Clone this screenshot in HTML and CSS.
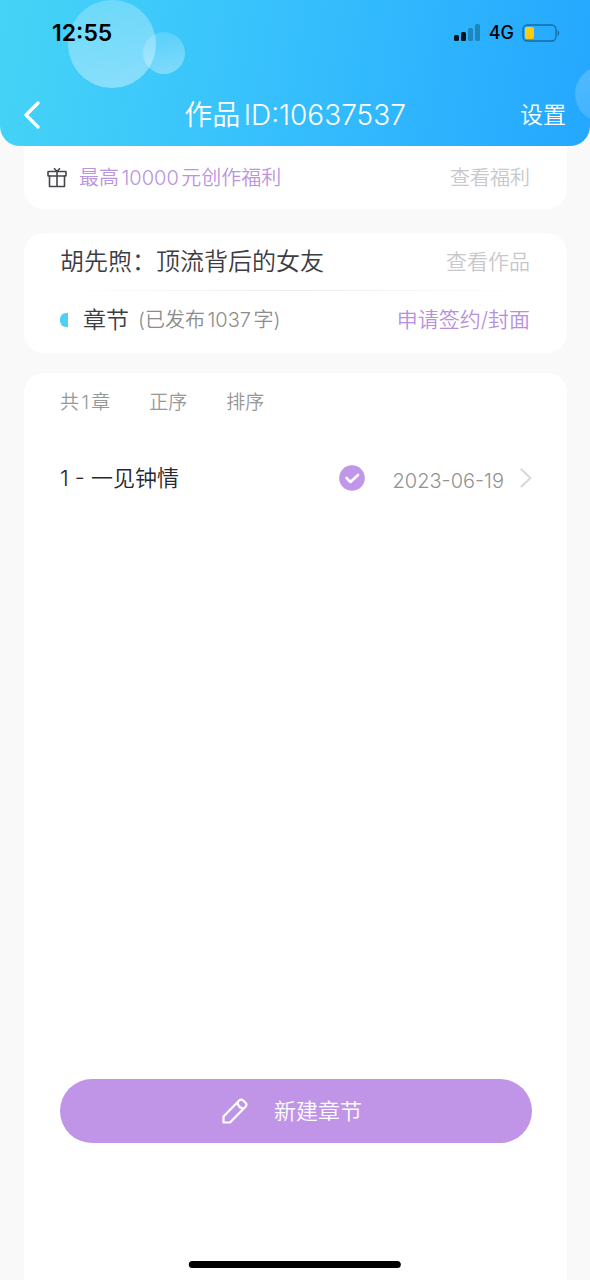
FILE: index.html
```html
<!DOCTYPE html>
<html lang="zh-CN">
<head>
<meta charset="utf-8">
<meta name="viewport" content="width=device-width, initial-scale=1">
<title>作品</title>
<link rel="stylesheet" href="styles.css">
</head>
<body>
<div class="page">
  <header class="header">
    <span class="bubble bubble-large"></span>
    <span class="bubble bubble-small"></span>
    <span class="bubble bubble-edge"></span>
    <div class="status">
      <span class="status-time">12:55</span>
      <div class="status-icons">
        <svg width="27" height="18" viewBox="0 0 27 18" aria-hidden="true">
          <rect x="0" y="11" width="5" height="6" rx="1.5" fill="#06131c"/>
          <rect x="7" y="8" width="5" height="9" rx="1.5" fill="#06131c"/>
          <rect x="14" y="4" width="5" height="13" rx="1.5" fill="#1c86bd"/>
          <rect x="21" y="0" width="5" height="17" rx="1.5" fill="#1c86bd"/>
        </svg>
        <span class="status-network">4G</span>
        <svg width="38" height="18" viewBox="0 0 38 18" aria-hidden="true">
          <rect x="1" y="1" width="33" height="16" rx="4.5" fill="none" stroke="#17699a" stroke-width="1.3"/>
          <rect x="3" y="3" width="9" height="12" rx="2" fill="#ffcb0a"/>
          <path d="M35.6 6.2c2 .8 2 4.800 0 5.600z" fill="#17699a"/>
        </svg>
      </div>
    </div>
    <nav class="nav">
      <button class="nav-back" type="button" aria-label="返回">
        <svg width="16" height="28" viewBox="0 0 16 28" aria-hidden="true"><path d="M14 2 2 14l12 12" fill="none" stroke="#fff" stroke-width="3.200" stroke-linecap="round" stroke-linejoin="round"/></svg>
      </button>
      <h1 class="nav-title">作品ID:10637537</h1>
      <button class="nav-settings" type="button">设置</button>
    </nav>
  </header>

  <main class="content">
    <section class="card welfare">
      <svg class="gift" width="20" height="20" viewBox="0 0 20 20" fill="none" stroke="#45454d" stroke-width="1.600" stroke-linejoin="round" stroke-linecap="round" aria-hidden="true">
        <rect x="1" y="3.500" width="18" height="4.500" rx=".5"/>
        <path d="M2.500 8v10.500h15V8M10 3.500v15M7.500 .8l2.500 2.700L12.500 .8"/>
      </svg>
      <span class="welfare-text">最高10000元创作福利</span>
      <a class="link-muted" href="#welfare">查看福利</a>
    </section>

    <section class="card work">
      <div class="row">
        <h2 class="work-title">胡先煦：顶流背后的女友</h2>
        <a class="link-muted link-large" href="#work">查看作品</a>
      </div>
      <div class="divider"></div>
      <div class="row">
        <span class="marker"></span>
        <h3 class="chapter-label">章节</h3>
        <span class="word-count">(已发布1037字)</span>
        <a class="link-accent link-large" href="#sign">申请签约/封面</a>
      </div>
    </section>

    <section class="card chapters">
      <div class="filters">
        <span>共1章</span>
        <button class="filter" type="button">正序</button>
        <button class="filter" type="button">排序</button>
      </div>
      <a class="chapter" href="#chapter-1">
        <span class="chapter-name">1 - 一见钟情</span>
        <svg class="check" width="26" height="26" viewBox="0 0 26 26" aria-hidden="true">
          <circle cx="13" cy="13" r="12.800" fill="#c097e8"/>
          <path d="m7.500 13 4 4 7.500-7" fill="none" stroke="#fff" stroke-width="2.600" stroke-linecap="round" stroke-linejoin="round"/>
        </svg>
        <time class="chapter-date" datetime="2023-06-19">2023-06-19</time>
        <svg class="chevron" width="12" height="20" viewBox="0 0 12 20" aria-hidden="true"><path d="m1.500 1.500 9 8.500-9 8.500" fill="none" stroke="#d9d9d9" stroke-width="2.200" stroke-linecap="round" stroke-linejoin="round"/></svg>
      </a>
      <button class="create" type="button">
        <svg width="26" height="26" viewBox="0 0 26 26" fill="none" stroke="#fff" stroke-width="2.200" stroke-linejoin="round" aria-hidden="true">
          <path d="M1.500 24.500V18.500L17.200 2.500q2-1.800 4 0l2.300 2.300q1.800 2 0 4L8 24.500zM15.500 4.500c.5 3.500 2.500 5.500 6 6"/>
        </svg>
        <span>新建章节</span>
      </button>
    </section>
  </main>
  <div class="home-indicator"></div>
</div>
</body>
</html>
```

FILE: styles.css
```css
* {
  box-sizing: border-box;
}

body {
  margin: 0;
  background: #f9f9f9;
  color: #3c3c44;
  font-family: Inter, "Noto Sans CJK SC", sans-serif;
  font-size: 20px;
  font-weight: 350;
  line-height: 28px;
  text-autospace: normal;
}

h1, h2, h3 {
  margin: 0;
  font-weight: inherit;
}

button {
  padding: 0;
  border: 0;
  background: none;
  color: inherit;
  font: inherit;
  cursor: pointer;
}

a {
  color: inherit;
  text-decoration: none;
}

svg {
  display: block;
  flex: none;
}

.page {
  display: flex;
  flex-direction: column;
  min-height: 100vh;
}

.header {
  position: relative;
  overflow: hidden;
  border-radius: 0 0 20px 20px;
  background: linear-gradient(100deg, #45d4f6 0%, #39c3fc 40%, #24a7ff 100%);
  color: #fff;
}

.bubble {
  position: absolute;
  border-radius: 50%;
}

.bubble-large {
  top: 0;
  left: 68px;
  width: 88px;
  height: 88px;
  background: linear-gradient(165deg, rgba(255, 255, 255, .22), rgba(255, 255, 255, .4));
}

.bubble-small {
  top: 32px;
  left: 143px;
  width: 42px;
  height: 42px;
  background: linear-gradient(165deg, rgba(255, 255, 255, .12), rgba(255, 255, 255, .36));
}

.bubble-edge {
  top: 66px;
  right: -41px;
  width: 56px;
  height: 56px;
  background: linear-gradient(165deg, rgba(255, 255, 255, .2), rgba(255, 255, 255, .12));
}

.status {
  position: relative;
  display: flex;
  align-items: center;
  justify-content: space-between;
  height: 66px;
  padding: 0 30px 0 52px;
  color: #000;
}

.status-time {
  font-size: 23px;
  font-weight: 600;
}

.status-icons {
  display: flex;
  align-items: center;
  gap: 8px;
}

.status-network {
  font-size: 18px;
  font-weight: 500;
}

.nav {
  position: relative;
  display: grid;
  grid-template-columns: 1fr auto 1fr;
  align-items: center;
  height: 80px;
  padding: 18px 24px 0;
}

.nav-back {
  justify-self: start;
}

.nav-title {
  font-size: 28px;
  line-height: 36px;
}

.nav-settings {
  justify-self: end;
  font-size: 23px;
}

.content {
  flex: 1;
  display: flex;
  flex-direction: column;
  padding: 0 23px 0 24px;
}

.card {
  border-radius: 20px;
  background: #fff;
}

.welfare {
  display: flex;
  align-items: center;
  gap: 12px;
  height: 63px;
  margin-bottom: 24px;
  padding: 0 37px 0 23px;
  border-radius: 0 0 20px 20px;
}

.welfare-text {
  color: #bb94de;
}

.link-muted {
  margin-left: auto;
  color: #c8c8cc;
}

.link-large {
  font-size: 21px;
}

.work {
  margin-bottom: 20px;
  padding: 0 37px 5px 36px;
}

.row {
  display: flex;
  align-items: center;
  height: 57px;
}

.work-title {
  font-size: 24px;
}

.divider {
  height: 1px;
  background: linear-gradient(90deg, transparent, #ececec 50%, transparent);
}

.marker {
  width: 8px;
  height: 14px;
  margin-right: 15px;
  border-radius: 6px 0 0 6px;
  background: #4cd0f3;
}

.chapter-label {
  margin-right: 9px;
  font-size: 23px;
}

.word-count {
  color: #8c8c8c;
}

.link-accent {
  margin-left: auto;
  color: #b88fde;
}

.chapters {
  flex: 1;
  display: flex;
  flex-direction: column;
  padding: 16px 35px 137px 36px;
  border-radius: 20px 20px 0 0;
}

.filters {
  display: flex;
  gap: 39px;
  color: #979797;
  font-size: 19px;
}

.chapter {
  display: flex;
  align-items: center;
  margin-top: 42px;
  line-height: 32px;
}

.chapter-name {
  color: #27272f;
  font-size: 22px;
}

.check {
  margin-left: auto;
}

.chapter-date {
  margin: 6px 16px 0 28px;
  color: #929292;
}

.create {
  display: flex;
  align-items: center;
  justify-content: center;
  gap: 26px;
  width: 100%;
  height: 64px;
  margin-top: auto;
  padding-right: 8px;
  border-radius: 32px;
  background: #c095e8;
  color: #fff;
  font-size: 22px;
}

.home-indicator {
  position: fixed;
  bottom: 12px;
  left: 50%;
  width: 36%;
  height: 7px;
  border-radius: 4px;
  background: #000;
  transform: translateX(-50%);
}
```
